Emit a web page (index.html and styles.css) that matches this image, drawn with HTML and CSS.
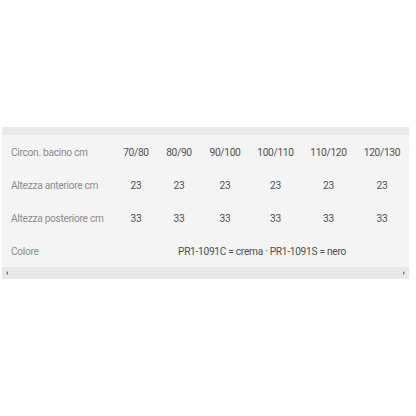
FILE: index.html
```html
<!DOCTYPE html>
<html>
<head>
<meta charset="utf-8">
<link rel="stylesheet" href="styles.css">
</head>
<body>
<div class="wrap">
  <table class="sizes">
    <colgroup>
      <col class="c-label"><col class="c1"><col class="c2"><col class="c3"><col class="c4"><col class="c5"><col class="c6">
    </colgroup>
    <thead>
      <tr class="head"><th colspan="7"></th></tr>
    </thead>
    <tbody>
      <tr>
        <td class="label">Circon. bacino cm</td>
        <td>70/80</td><td>80/90</td><td>90/100</td><td>100/110</td><td>110/120</td><td>120/130</td>
      </tr>
      <tr>
        <td class="label">Altezza anteriore cm</td>
        <td>23</td><td>23</td><td>23</td><td>23</td><td>23</td><td>23</td>
      </tr>
      <tr>
        <td class="label">Altezza posteriore cm</td>
        <td>33</td><td>33</td><td>33</td><td>33</td><td>33</td><td>33</td>
      </tr>
      <tr>
        <td class="label">Colore</td>
        <td colspan="6">PR1-1091C = crema · PR1-1091S = nero</td>
      </tr>
    </tbody>
  </table>
  <div class="scrollbar">
    <span class="arrow left"></span>
    <span class="arrow right"></span>
  </div>
</div>
</body>
</html>
```
FILE: styles.css
```css
html, body {
  margin: 0;
  padding: 0;
  background: #ffffff;
}
body {
  font-family: Roboto, "Liberation Sans", sans-serif;
  font-size: 10.2px;
  letter-spacing: -0.3px;
}
.wrap {
  margin: 127px 0 0 2px;
  width: 407px;
  background: #f4f4f4;
}
.sizes {
  border-collapse: collapse;
  table-layout: fixed;
  width: 407px;
}
.c-label { width: 113px; }
.c1 { width: 42px; }
.c2 { width: 44px; }
.c3 { width: 48px; }
.c4 { width: 53px; }
.c5 { width: 53px; }
.c6 { width: 54px; }
.head th {
  height: 8px;
  padding: 0;
  background: #e9e9e9;
}
.sizes td {
  height: 33px;
  box-sizing: border-box;
  padding: 2px 0 0;
  text-align: center;
  color: #505050;
  white-space: nowrap;
  vertical-align: middle;
}
.sizes td.label {
  text-align: left;
  padding-left: 9px;
  color: #8c8c8c;
}
.scrollbar {
  height: 12px;
  background: #e8e8e8;
  display: flex;
  justify-content: space-between;
  align-items: center;
  padding: 0 4px;
}
.arrow {
  width: 0;
  height: 0;
  border-top: 2px solid transparent;
  border-bottom: 2px solid transparent;
}
.arrow.left { border-right: 2px solid #777; }
.arrow.right { border-left: 2px solid #777; }
```
